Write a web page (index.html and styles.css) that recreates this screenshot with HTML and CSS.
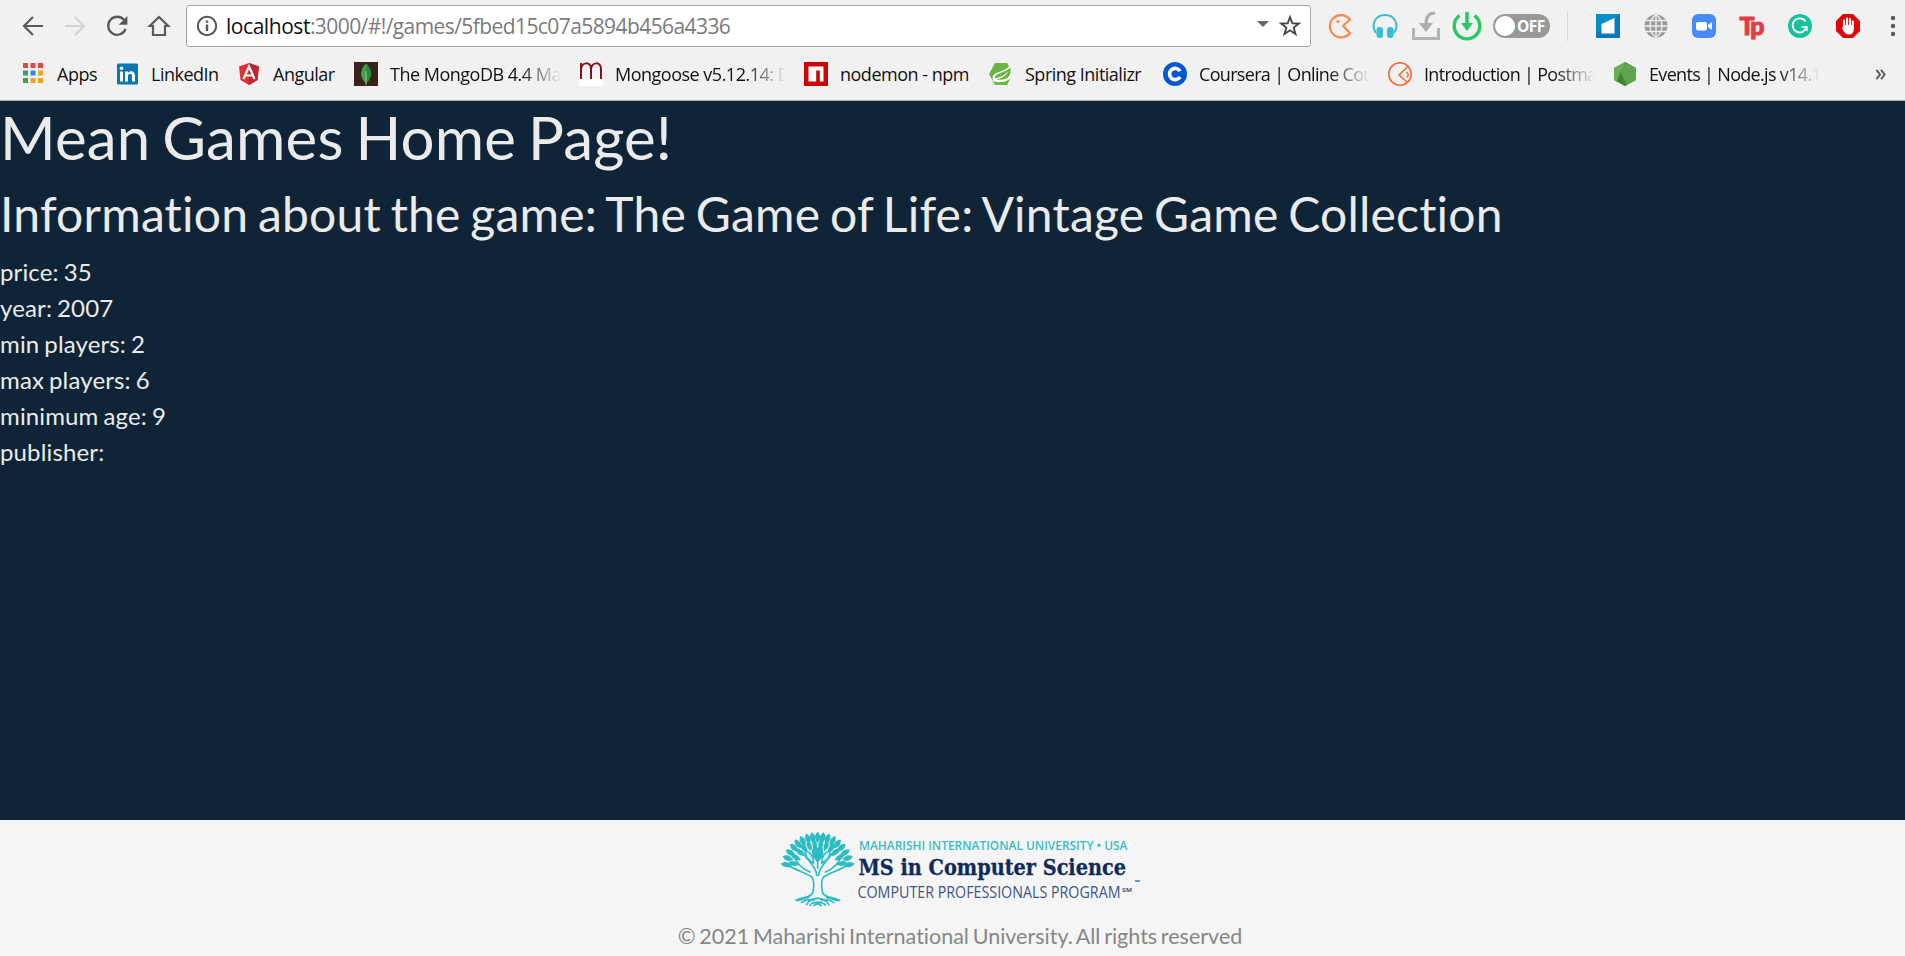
FILE: index.html
```html
<!DOCTYPE html>
<html lang="en">
<head>
<meta charset="utf-8">
<title>Mean Games</title>
<link rel="stylesheet" href="styles.css">
</head>
<body>
<header class="chrome">
  <div class="toolbar">
    <nav class="nav">
      <svg width="24" height="24" viewBox="0 0 24 24" fill="none" stroke="#5a5a5a" stroke-width="2.2"><path d="M22 12H3M12 3L3 12l9 9"/></svg>
      <svg width="24" height="24" viewBox="0 0 24 24" fill="none" stroke="#d4d4d4" stroke-width="2.2"><path d="M2 12h19M12 3l9 9-9 9"/></svg>
      <svg width="24" height="24" viewBox="0 0 24 24"><path d="M19.3 6.2A9 9 0 1 0 20.6 15" fill="none" stroke="#5a5a5a" stroke-width="2.3"/><path d="M22.4 2v8.7h-8.7z" fill="#5a5a5a"/></svg>
      <svg width="24" height="24" viewBox="0 0 24 24" fill="none" stroke="#5a5a5a" stroke-width="2.2"><path d="M6 12v9h12v-9h3.2L12 3 2.8 12z"/></svg>
    </nav>
    <div class="address">
      <svg class="info" width="22" height="22" viewBox="0 0 22 22"><circle cx="11" cy="11" r="9.2" fill="none" stroke="#555" stroke-width="2"/><path d="M11 9.5v6.5M11 5.5v2.3" stroke="#555" stroke-width="2.4"/></svg>
      <span class="url"><span class="host">localhost</span>:3000/#!/games/5fbed15c07a5894b456a4336</span>
      <svg class="caret" width="12" height="6" viewBox="0 0 12 6"><path d="M0 0h12L6 6z" fill="#666"/></svg>
      <svg width="24" height="24" viewBox="0 0 24 24"><path d="M12 3.2l2.3 6.1 6.5.3-5.1 4 1.8 6.4-5.5-3.7L6.500 20l1.800-6.400-5.100-4 6.500-.3z" fill="none" stroke="#484848" stroke-width="1.9"/></svg>
    </div>
    <div class="extensions">
      <svg width="26" height="26" viewBox="0 0 26 26" fill="none" stroke="#f7894d" stroke-width="2.200"><path d="M23 6.500A11.200 11.200 0 1 0 23 20l-7-7z" stroke-linejoin="round"/><circle cx="11" cy="8.500" r="1.500" fill="#f7894d" stroke="none"/></svg>
      <svg width="26" height="26" viewBox="0 0 26 26"><path d="M4 20C-2 11 4 2 13 2s15 9 9 18" fill="none" stroke="#35bfd0" stroke-width="2"/><rect x="4.500" y="14" width="6.500" height="11" rx="3" fill="#35bfd0"/><rect x="15" y="14" width="6.500" height="11" rx="3" fill="#35bfd0"/></svg>
      <svg width="28" height="30" viewBox="0 0 28 30"><path d="M1.500 17v10.500h25V17" fill="none" stroke="#b2b2b2" stroke-width="3"/><path d="M23 2c-6 0-9 4-9 11" fill="none" stroke="#adadad" stroke-width="3.200"/><path d="M7 12h14l-7 9z" fill="#adadad"/></svg>
      <svg width="30" height="30" viewBox="0 0 30 30"><path d="M22.500 4.700A12.800 12.800 0 1 1 7.500 4.700" fill="none" stroke="#2bc765" stroke-width="3.400"/><path d="M15 1v14" stroke="#2bc765" stroke-width="3.500"/><path d="M9 12h12l-6 8z" fill="#2bc765"/></svg>
      <div class="toggle"><i class="knob"></i><b>OFF</b></div>
      <i class="divider"></i>
      <svg width="24" height="24" viewBox="0 0 24 24"><path d="M0 0h24v24H0z" fill="#0878bd"/><path d="M0 0h24L0 20z" fill="#078fcb"/><path d="M5.500 10L18.500 4v15.500h-13z" fill="#fff"/></svg>
      <svg width="24" height="24" viewBox="0 0 24 24"><circle cx="12" cy="12" r="11.500" fill="#9b9b9b"/><path d="M12 0v24M0 12h24M2 6.500h20M2 17.500h20M12 .5c-8 6-8 17 0 23M12 .5c8 6 8 17 0 23" fill="none" stroke="#f0f0f0" stroke-width="1.300"/></svg>
      <svg width="24" height="24" viewBox="0 0 24 24"><rect width="24" height="24" rx="6" fill="#478bf8"/><rect x="4" y="8" width="11" height="8.500" rx="2" fill="#fff"/><path d="M16 11l4-3v8l-4-3z" fill="#fff"/></svg>
      <span class="tp">Tp</span>
      <svg width="24" height="24" viewBox="0 0 24 24"><circle cx="12" cy="12" r="12" fill="#15c39a"/><path d="M17.500 7.500A7 7 0 1 0 18.500 13h-4.800M18.700 13v4" fill="none" stroke="#fff" stroke-width="1.900"/></svg>
      <svg width="24" height="24" viewBox="0 0 24 24"><path d="M7 0h10l7 7v10l-7 7H7l-7-7V7z" fill="#e1060c"/><path d="M8 14V6.500M11 12V4.500M14 12V5M16.800 14V7.500" stroke="#fff" stroke-width="2.100" stroke-linecap="round"/><path d="M7 11h10.800v4c0 3-1.500 5.500-4.500 5.500-3.500 0-5-2-7.500-6.500.8-1 1.700-.5 2 0z" fill="#fff"/></svg>
      <svg class="menu" width="6" height="22" viewBox="0 0 6 22" fill="#5a5a5a"><circle cx="3" cy="3" r="2.200"/><circle cx="3" cy="11" r="2.200"/><circle cx="3" cy="19" r="2.200"/></svg>
    </div>
  </div>
  <div class="bookmarks">
    <a class="bm"><svg viewBox="0 0 24 24"><g fill="#e8453c"><path d="M2 1h5v5H2zM9.500 1h5v5h-5zM17 1h5v5h-5z"/></g><path d="M2 8.500h5v5H2zM2 16h5v5H2z" fill="#3c9d58"/><path d="M9.500 8.500h5v5h-5z" fill="#2b86ee"/><path d="M17 8.500h5v5h-5zM17 16h5v5h-5zM9.500 16h5v5h-5z" fill="#eba51b"/></svg><span>Apps</span></a>
    <a class="bm"><svg viewBox="0 0 24 24"><rect x="2" y="1.500" width="21" height="21" rx="1.500" fill="#0877b5"/><path d="M5 9.500h3v10H5zM10 9.500h3V11c1.500-2.500 7-2.500 7 2.500v6h-3V14c0-3-4-3-4 0v5.500h-3z" fill="#fff"/><circle cx="6.500" cy="6.200" r="1.800" fill="#fff"/></svg><span>LinkedIn</span></a>
    <a class="bm"><svg viewBox="0 0 24 24"><path d="M12 1l10 3.500L20.500 18 12 23 3.500 18 2 4.500z" fill="#df3038"/><path d="M12 1l10 3.500L20.500 18 12 23z" fill="#bd2632"/><path d="M6.500 17L12 4.500 17.500 17M8.500 13.500h7" fill="none" stroke="#fff" stroke-width="2.200"/></svg><span>Angular</span></a>
    <a class="bm"><svg viewBox="0 0 24 24"><path d="M0 0h24v24H0z" fill="#38241b"/><path d="M12 1.500c7 7 6 14 0 20-6-6-7-13 0-20z" fill="#3fa34a"/><path d="M12 1.500c7 7 6 14 0 20z" fill="#2b8a3b"/><path d="M12 9v14" stroke="#a7bba0"/></svg><span class="fade">The MongoDB 4.4 Ma</span></a>
    <a class="bm"><svg viewBox="0 0 24 24"><path d="M0 0h24v24H0z" fill="#fff"/><path d="M0 0h24v16H0z" fill="#f5f3f3"/><path d="M2 17V1M2 7c1-7 10-8 10 0v10M12 7c1-7 10-8 10 0v10" fill="none" stroke="#7d161b" stroke-width="2"/></svg><span class="fade">Mongoose v5.12.14: D</span></a>
    <a class="bm"><svg viewBox="0 0 24 24"><path d="M0 0h24v24H0z" fill="#cb0606"/><path d="M4.500 4.500h15v15h-3.700V8.500h-3.600v11H4.500z" fill="#fff"/></svg><span>nodemon - npm</span></a>
    <a class="bm"><svg viewBox="0 0 24 24"><path d="M6 1h12l4 6c1 5-1 11-4 16H6L0 12z" fill="#6ab644"/><path d="M21.500 2c3 8 2 17-8 18-4 .4-8 0-9.500-1.500C1 8 17 12 21.500 2z" fill="#fff"/><path d="M21.300 5c1.500 7-1 11.500-7.300 12.500-3.500.5-5 .3-6.500 0C12 16.500 17 14 19.500 9.500 16 13 12 15 6 16.500 5.500 9.500 17 12 21.300 5z" fill="#6ab644"/></svg><span>Spring Initializr</span></a>
    <a class="bm"><svg viewBox="0 0 24 24"><circle cx="12" cy="12" r="12" fill="#0657d2"/><path d="M17 9.200a5.600 5.600 0 1 0 0 5.600" fill="none" stroke="#fff" stroke-width="3.600"/></svg><span class="fade tight">Coursera | Online Cou</span></a>
    <a class="bm"><svg viewBox="0 0 24 24" fill="none" stroke="#f26b3a" stroke-width="1.600"><circle cx="12" cy="12" r="11.200"/><path d="M20 4.500L11 13l8.500 7.500M11 13l4-4M18.500 10c2.500 2 2 5 0 5"/></svg><span class="fade tight">Introduction | Postma</span></a>
    <a class="bm"><svg viewBox="0 0 24 24"><path d="M12 0l11 6v12l-11 6-11-6V6z" fill="#559d43"/><path d="M12 0L1 6v12l3 2z" fill="#68af55"/><path d="M7 10l7 13-2 1-8-4.500z" fill="#3d8737"/><path d="M12 0l11 6v12L14 23 7 9z" fill="#60a54d"/></svg><span class="fade tight">Events | Node.js v14.1</span></a>
    <svg class="more" viewBox="0 0 12 12" fill="none" stroke="#555" stroke-width="2"><path d="M1 1l4 5-4 5M6 1l4 5-4 5"/></svg>
  </div>
</header>
<main class="page">
  <h1>Mean Games Home Page!</h1>
  <h2>Information about the game: The Game of Life: Vintage Game Collection</h2>
  <div>price: 35</div>
  <div>year: 2007</div>
  <div>min players: 2</div>
  <div>max players: 6</div>
  <div>minimum age: 9</div>
  <div>publisher:</div>
</main>
<footer class="footer">
  <svg class="logo" width="362" height="80" viewBox="0 0 362 80">
    <defs>
      <path id="leaf" d="M0-112C11-101 10-90 0-78C-10-90-11-101 0-112z"/>
      <path id="leaf2" d="M0-90C10-80 9-69 0-57C-9-69-10-80 0-90z"/>
      <path id="leaf3" d="M0-66C11-53 10-36 0-22C-10-36-11-53 0-66z"/>
    </defs>
    <g transform="translate(-8.300 -9) scale(.3333)">
      <g transform="translate(141 147)" fill="#2bbcc4">
        <use href="#leaf" transform="rotate(-82)"/><use href="#leaf" transform="rotate(-70)"/><use href="#leaf" transform="rotate(-59)"/><use href="#leaf" transform="rotate(-48)"/><use href="#leaf" transform="rotate(-38)"/><use href="#leaf" transform="rotate(-28)"/><use href="#leaf" transform="rotate(-18)"/><use href="#leaf" transform="rotate(-9)"/><use href="#leaf"/><use href="#leaf" transform="rotate(9)"/><use href="#leaf" transform="rotate(18)"/><use href="#leaf" transform="rotate(28)"/><use href="#leaf" transform="rotate(38)"/><use href="#leaf" transform="rotate(48)"/><use href="#leaf" transform="rotate(59)"/><use href="#leaf" transform="rotate(70)"/><use href="#leaf" transform="rotate(82)"/>
        <use href="#leaf2" transform="rotate(-77)"/><use href="#leaf2" transform="rotate(-62)"/><use href="#leaf2" transform="rotate(-47)"/><use href="#leaf2" transform="rotate(-33)"/><use href="#leaf2" transform="rotate(-20)"/><use href="#leaf2" transform="rotate(-7)"/><use href="#leaf2" transform="rotate(7)"/><use href="#leaf2" transform="rotate(20)"/><use href="#leaf2" transform="rotate(33)"/><use href="#leaf2" transform="rotate(47)"/><use href="#leaf2" transform="rotate(62)"/><use href="#leaf2" transform="rotate(77)"/>
      </g>
      <g transform="translate(141 147)" fill="#d9f1f2" stroke="#2bbcc4" stroke-width="5">
        <use href="#leaf3" transform="rotate(-34)"/><use href="#leaf3" transform="rotate(34)"/>
        <use href="#leaf3" fill="#2bbcc4" transform="translate(0 -4) rotate(-8)"/><use href="#leaf3" fill="#2bbcc4" transform="translate(0 -4) rotate(8)"/>
      </g>
      <g fill="none" stroke="#2bbcc4" stroke-width="5" stroke-linecap="round">
        <path d="M52 135c25 18 60 24 73 38 6 12 5 30 1 46-9 16-30 11-49 22M230 135c-25 18-60 24-73 38-6 12-5 30-1 46 9 16 30 11 49 22"/>
        <path d="M70 108c10 28 28 40 48 48M212 108c-10 28-28 40-48 48M138 166c-2-25-18-32-26-50M144 166c2-25 18-32 26-50M141 85v60M92 92l18 25M190 92l-18 25"/>
        <path d="M77 241c13 3 27-10 37-8M205 241c-13 3-27-10-37-8M93 248c9-8 23-11 29-6M189 248c-9-8-23-11-29-6M108 254c7-17 21-19 33-19s26 2 33 19M118 256c8-13 38-13 46 0M128 241c8-8 18-8 26 0M130 257c8-8 14-8 22 0M133 248h16"/>
      </g>
    </g>
    <text class="logo-top" x="80" y="20.500" textLength="268.500" lengthAdjust="spacingAndGlyphs">MAHARISHI INTERNATIONAL UNIVERSITY • USA</text>
    <text class="logo-main" x="79.500" y="46" textLength="267.500" lengthAdjust="spacingAndGlyphs">MS in Computer Science</text>
    <text class="logo-sub" x="78.500" y="69" textLength="263" lengthAdjust="spacingAndGlyphs">COMPUTER PROFESSIONALS PROGRAM</text>
    <text class="logo-sm" x="343" y="63" textLength="10" lengthAdjust="spacingAndGlyphs">SM</text>
    <path d="M356 52h5" stroke="#5ca0d6" stroke-width="2"/>
  </svg>
  <p>© 2021 Maharishi International University. All rights reserved</p>
</footer>
</body>
</html>
```
FILE: styles.css
```css
* { box-sizing: border-box; }
body { margin: 0; height: 956px; display: flex; flex-direction: column; overflow: hidden; background: #0f2537; font-family: Lato, sans-serif; font-variant-ligatures: none; }
svg { display: block; flex: none; }
.chrome { height: 101px; flex: none; background: #f1f1f1; border-bottom: 1px solid #a9b0b4; font-family: "Open Sans", "Noto Sans", sans-serif; }
.toolbar { height: 52px; display: flex; align-items: center; }
.nav { width: 186px; padding-left: 21px; display: flex; gap: 18px; }
.address { width: 1125px; height: 42px; border: 1px solid #a6a6a6; border-radius: 3px; background: #fff; display: flex; align-items: center; padding: 0 8px 0 9px; }
.url { flex: 1; margin-left: 8px; font-size: 21px; letter-spacing: -.58px; color: #7b7b7b; white-space: nowrap; }
.host { color: #111; letter-spacing: -.45px; }
.caret { margin: 0 9px 4px 0; }
.extensions { display: grid; grid-template-columns: 44px 46px 36px 46px 63px 28px 54px 41px 56px 40px 56px 40px 28px; width: 587px; padding-left: 7px; justify-items: center; align-items: center; }
.menu { justify-self: end; }
.toggle { width: 57px; height: 24px; border-radius: 12px; background: #989898; display: flex; align-items: center; padding: 2px; color: #fff; font-size: 15.5px; letter-spacing: -.5px; }
.knob { width: 20px; height: 20px; border-radius: 50%; background: #fff; margin-right: 2px; }
.divider { width: 1px; height: 30px; background: #d5d5d5; }
.tp { font: 900 25px/24px Lato, sans-serif; color: #e33d43; letter-spacing: -2px; margin: 0 2px 2px 0; -webkit-text-stroke: 1px #e33d43; }
.bookmarks { height: 44px; display: grid; grid-template-columns: 94px 122px 117px 225px 225px 185px 174px 225px 225px 262px 12px; padding-left: 21px; align-items: center; }
.bm { display: flex; align-items: center; gap: 12px; font-size: 18px; letter-spacing: -.5px; line-height: 26px; color: #111; white-space: nowrap; }
.bm svg { width: 24px; height: 24px; }
.fade { width: 171px; overflow: hidden; -webkit-mask-image: linear-gradient(90deg, #000 76%, transparent 100%); mask-image: linear-gradient(90deg, #000 76%, transparent 100%); }
.tight { letter-spacing: -.68px; }
.more { width: 12px; height: 11px; }
.page { flex: 1; color: #ebebeb; font-size: 24px; line-height: 36px; letter-spacing: .14px; word-spacing: -1.3px; }
h1, h2 { margin: 0 0 12px; font-weight: 400; line-height: 1.2; white-space: nowrap; }
h1 { font-size: 60px; word-spacing: -3.5px; }
h2 { font-size: 48px; word-spacing: -2.7px; letter-spacing: .2px; margin-bottom: 11px; }
.footer { height: 136px; flex: none; background: #f5f5f5; color: #868686; display: flex; flex-direction: column; align-items: center; padding-top: 9px; }
.logo { overflow: visible; margin-left: 14px; }
.footer p { margin: 11px 0 0 15px; font-size: 21.5px; line-height: 32px; word-spacing: -1.8px; }
.logo-top { font: 600 12px "Open Sans", sans-serif; fill: #39bdc4; }
.logo-main { font: 700 23px "DejaVu Serif", serif; fill: #0e2a5c; stroke: #0e2a5c; stroke-width: .3px; }
.logo-sub { font: 400 15.5px "Open Sans", sans-serif; fill: #3d5586; }
.logo-sm { font: 700 6px "Open Sans", sans-serif; fill: #3d5586; }
```
